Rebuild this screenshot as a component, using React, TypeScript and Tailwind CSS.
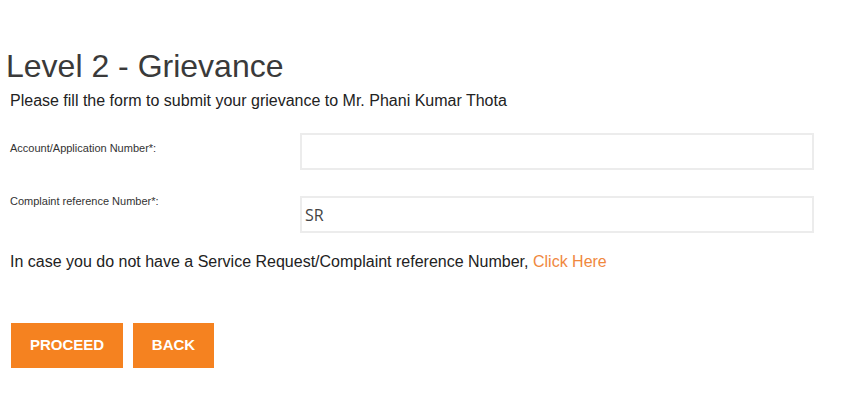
import { useState } from 'react';

const fieldRow = 'flex items-start';

export default function App() {
    const [account, setAccount] = useState('');
    const [reference, setReference] = useState('SR');

    return (
        <div className="min-h-screen bg-white font-['Liberation_Sans',Arial,sans-serif] text-[#333]">
            <div className="pt-[43px] pl-[6px] pr-[53px]">
                <h1 className="text-[32px] leading-[46px] text-[#3a3a3a]">Level 2 - Grievance</h1>
                <p className="pl-[4px] mt-[2px] text-[16px] leading-[20px] text-[#222]">
                    Please fill the form to submit your grievance to Mr. Phani Kumar Thota
                </p>

                <form className="pl-[4px] mt-[22px]" onSubmit={(e) => e.preventDefault()}>
                    <div className={fieldRow}>
                        <label className="w-[290px] pt-[8px] text-[11px] leading-[14px] text-[#333]">
                            Account/Application Number*:
                        </label>
                        <input
                            value={account}
                            onChange={(e) => setAccount(e.target.value)}
                            className="h-[37px] flex-1 border-2 border-[#ececec] px-[3px] text-[16px] font-['Open_Sans',sans-serif] text-[#444] outline-none"
                        />
                    </div>

                    <div className={`${fieldRow} mt-[26px]`}>
                        <label className="w-[290px] -mt-[2px] text-[11px] leading-[14px] text-[#333]">
                            Complaint reference Number*:
                        </label>
                        <input
                            value={reference}
                            onChange={(e) => setReference(e.target.value)}
                            className="h-[37px] flex-1 border-2 border-[#ececec] px-[3px] text-[16px] font-['Open_Sans',sans-serif] text-[#444] outline-none"
                        />
                    </div>

                    <p className="mt-[19px] text-[16px] leading-[20px] text-[#222]">
                        In case you do not have a Service Request/Complaint reference Number,{' '}
                        <a href="#" className="text-[#f0883e]">Click Here</a>
                    </p>

                    <div className="mt-[51px] flex gap-[10px] pl-[1px]">
                        <button type="submit" className="h-[45px] w-[112px] bg-[#f58220] text-[15px] font-bold text-white">
                            PROCEED
                        </button>
                        <button type="button" className="h-[45px] w-[81px] bg-[#f58220] text-[15px] font-bold text-white">
                            BACK
                        </button>
                    </div>
                </form>
            </div>
        </div>
    );
}
